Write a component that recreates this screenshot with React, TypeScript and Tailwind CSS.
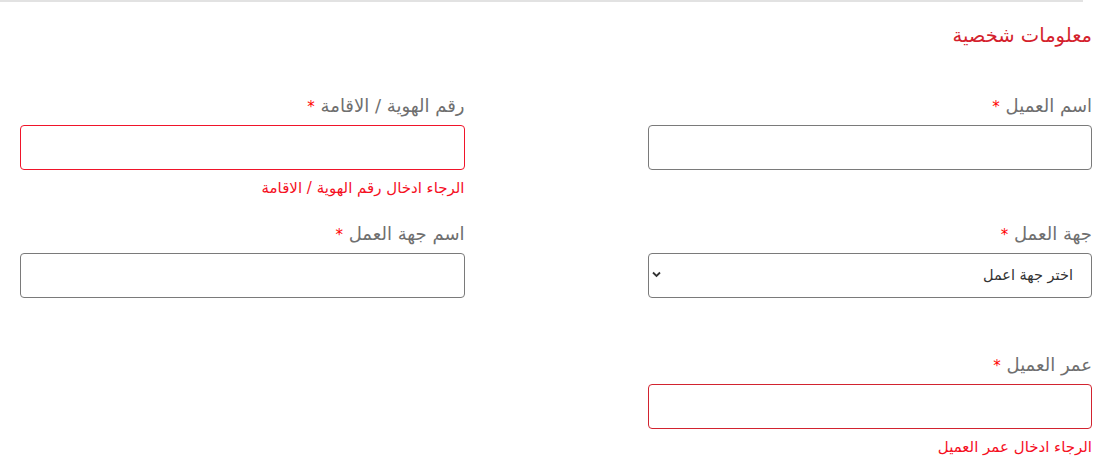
const font = { fontFamily: '"DejaVu Sans", "Noto Sans", sans-serif' }

function Label({ text }: { text: string }) {
  return (
    <label className="mb-[6px] block text-[18px] leading-[24px] text-[#6f6f6f]">
      {text} <span className="text-[15px] text-[#ff0000]">*</span>
    </label>
  )
}

function Field({
  label,
  error,
  errorTone = 'bright',
}: {
  label: string
  error?: string
  errorTone?: 'bright' | 'dark'
}) {
  const border = !error
    ? 'border-[#7a7a7a]'
    : errorTone === 'bright'
      ? 'border-[#f0142a]'
      : 'border-[#d2232f]'
  return (
    <div>
      <Label text={label} />
      <input
        type="text"
        className={`block h-[45px] w-full rounded-[4px] border bg-white px-3 ${border}`}
      />
      {error && (
        <p className="mt-[9px] text-[15px] leading-[18px] text-[#f5101f]">{error}</p>
      )}
    </div>
  )
}

export default function App() {
  return (
    <div dir="rtl" style={font} className="min-h-[476px] bg-white">
      <div className="mr-[21px] h-[2px] bg-[#e2e2e2]" />
      <div className="pl-[20px] pr-[12px]">
        <h2 className="mt-[21px] text-[19.5px] leading-[26px] text-[#d41f2d]">معلومات شخصية</h2>

        <div className="mt-[45px] grid grid-cols-2 gap-x-[183px]">
          <Field label="اسم العميل" />
          <Field label="رقم الهوية / الاقامة" error="الرجاء ادخال رقم الهوية / الاقامة" />
        </div>

        <div className="mt-[25px] grid grid-cols-2 gap-x-[183px]">
          <div>
            <Label text="جهة العمل" />
            <div className="relative">
              <select className="block h-[45px] w-full appearance-none rounded-[4px] border border-[#7a7a7a] bg-white pr-[18px] text-[14.5px] text-[#333]">
                <option>اختر جهة اعمل</option>
              </select>
              <svg
                className="pointer-events-none absolute left-[4px] top-[18px]"
                width="9"
                height="7"
                viewBox="0 0 9 7"
                fill="none"
              >
                <path d="M1 1.5l3.5 3.5L8 1.5" stroke="#333" strokeWidth="1.8" />
              </svg>
            </div>
          </div>
          <Field label="اسم جهة العمل" />
        </div>

        <div className="mt-[55px] grid grid-cols-2 gap-x-[183px]">
          <Field label="عمر العميل" error="الرجاء ادخال عمر العميل" errorTone="dark" />
        </div>
      </div>
    </div>
  )
}
